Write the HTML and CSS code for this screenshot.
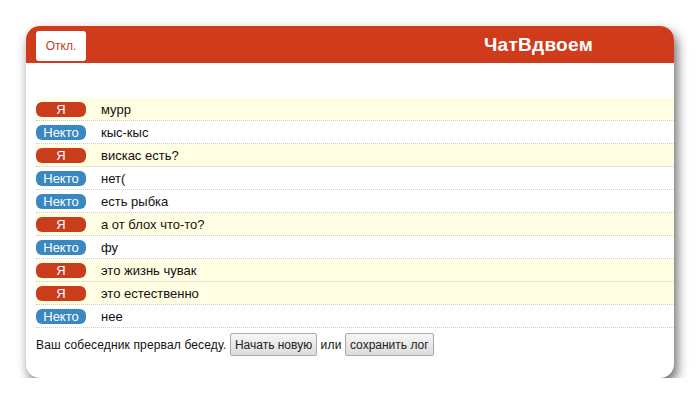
FILE: index.html
```html
<!DOCTYPE html>
<html lang="ru">
<head>
  <meta charset="UTF-8">
  <title>ЧатВдвоем</title>
  <link rel="stylesheet" href="styles.css">
</head>
<body>
  <div class="chat-window">
    <div class="chat-header">
      <button type="button" class="off-btn">Откл.</button>
      <h1 class="chat-title">ЧатВдвоем</h1>
    </div>
    <div class="chat-log">
      <div class="msg msg-me"><span class="who">Я</span><span class="text">мурр</span></div>
      <div class="msg msg-them"><span class="who">Некто</span><span class="text">кыс-кыс</span></div>
      <div class="msg msg-me"><span class="who">Я</span><span class="text">вискас есть?</span></div>
      <div class="msg msg-them"><span class="who">Некто</span><span class="text">нет(</span></div>
      <div class="msg msg-them"><span class="who">Некто</span><span class="text">есть рыбка</span></div>
      <div class="msg msg-me"><span class="who">Я</span><span class="text">а от блох что-то?</span></div>
      <div class="msg msg-them"><span class="who">Некто</span><span class="text">фу</span></div>
      <div class="msg msg-me"><span class="who">Я</span><span class="text">это жизнь чувак</span></div>
      <div class="msg msg-me"><span class="who">Я</span><span class="text">это естественно</span></div>
      <div class="msg msg-them"><span class="who">Некто</span><span class="text">нее</span></div>
    </div>
    <div class="chat-status">
      Ваш собеседник прервал беседу.
      <button type="button" class="gray-btn">Начать новую</button>
      или
      <button type="button" class="gray-btn">сохранить лог</button>
    </div>
  </div>
</body>
</html>
```

FILE: styles.css
```css
body {
  margin: 0;
  padding: 26px 26px 0 26px;
  background-color: #fff;
  font-family: "Liberation Sans", Arial, sans-serif;
  font-size: 13px;
  color: #111;
}
.chat-window {
  width: 648px;
  height: 352px;
  background-color: #fff;
  border-radius: 14px;
  box-shadow: 3px 6px 12px rgba(0, 0, 0, 0.6);
  overflow: hidden;
}
.chat-header {
  background-color: #d03c1b;
  height: 37px;
  display: flex;
  align-items: center;
  padding: 0 10px;
}
.off-btn {
  width: 50px;
  height: 30px;
  background-color: #fff;
  color: #c8391c;
  border: none;
  border-radius: 3px;
  font-family: inherit;
  font-size: 12px;
  padding: 0;
  margin-top: 3px;
}
.chat-title {
  margin: 0 0 0 auto;
  padding-right: 71px;
  color: #fff;
  font-size: 19px;
  font-weight: bold;
  letter-spacing: 0.3px;
}
.chat-log {
  padding: 35px 0 0 10px;
}
.msg {
  height: 22px;
  display: flex;
  align-items: center;
  border-bottom: 1px dotted #ccc;
}
.msg-me {
  background-color: #fffee2;
}
.who {
  width: 50px;
  height: 15px;
  line-height: 15px;
  border-radius: 6px;
  color: #fff;
  text-align: center;
  font-size: 13px;
  margin-right: 15px;
}
.msg-me .who {
  background-color: #c93d1d;
}
.msg-them .who {
  background-color: #3a88c1;
}
.chat-status {
  padding: 5px 10px;
  font-size: 12px;
  letter-spacing: 0.15px;
}
.gray-btn {
  height: 23px;
  padding: 0 4px;
  margin: 0;
  font-family: inherit;
  font-size: 12px;
  letter-spacing: 0;
  color: #222;
  background: linear-gradient(#f6f6f6, #dcdcdc);
  border: 1px solid #aaa;
  border-radius: 2px;
}
```
